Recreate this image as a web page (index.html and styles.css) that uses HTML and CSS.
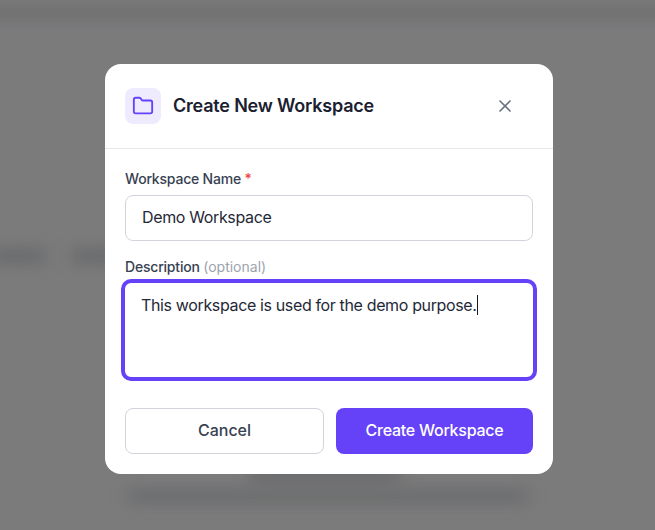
FILE: index.html
```html
<!DOCTYPE html>
<html lang="en">
<head>
<meta charset="utf-8">
<title>Create New Workspace</title>
<link rel="stylesheet" href="styles.css">
</head>
<body>
<div class="backdrop" aria-hidden="true">
  <div class="band band-top"></div>
  <div class="band-row">
    <div class="band band-a"></div>
    <div class="band band-b"></div>
  </div>
  <div class="band band-foot-a"></div>
  <div class="band band-foot-b"></div>
</div>
<div class="overlay">
  <section class="modal">
    <header class="modal-head">
      <div class="head-left">
        <div class="icon-tile">
          <svg width="22" height="22" viewBox="0 0 24 24" fill="none" stroke="#6542f8" stroke-width="2" stroke-linecap="round" stroke-linejoin="round"><path d="M20 20a2 2 0 0 0 2-2V8a2 2 0 0 0-2-2h-7.9a2 2 0 0 1-1.69-.9L9.6 3.9A2 2 0 0 0 7.93 3H4a2 2 0 0 0-2 2v13a2 2 0 0 0 2 2Z"/></svg>
        </div>
        <h2 class="title">Create New Workspace</h2>
      </div>
      <div class="close">
        <svg width="20" height="20" viewBox="0 0 24 24" fill="none" stroke="#6b7280" stroke-width="2" stroke-linecap="round" stroke-linejoin="round"><path d="M18 6 6 18"/><path d="m6 6 12 12"/></svg>
      </div>
    </header>
    <div class="modal-body">
      <div class="field">
        <div class="label">Workspace Name <span class="req">*</span></div>
        <div class="input">Demo Workspace</div>
      </div>
      <div class="field field-desc">
        <div class="label">Description <span class="opt">(optional)</span></div>
        <div class="textarea">This workspace is used for the demo purpose.<span class="caret"></span></div>
      </div>
      <div class="actions">
        <div class="btn btn-cancel">Cancel</div>
        <div class="btn btn-primary">Create Workspace</div>
      </div>
    </div>
  </section>
</div>
</body>
</html>
```
FILE: styles.css
```css
* { box-sizing: border-box; }
html, body { margin: 0; height: 530px; overflow: hidden; }
body {
  position: relative;
  background: #7b7b7c;
  font-family: Inter, "Liberation Sans", sans-serif;
}
.backdrop { position: absolute; inset: 0; overflow: hidden; }
.band { position: absolute; background: #616263; filter: blur(8px); }
.band-top { left: -20px; right: -20px; top: 9px; height: 8px; background: #666768; }
.band-row { position: absolute; inset: 0; }
.band-a { left: -10px; width: 55px; top: 250px; height: 12px; background: #656667; }
.band-b { left: 72px; width: 60px; top: 250px; height: 12px; background: #656667; }
.band-foot-a { left: 250px; width: 150px; top: 470px; height: 10px; }
.band-foot-b { left: 128px; width: 400px; top: 491px; height: 10px; background: #656667; }
.overlay {
  position: relative;
  height: 530px;
  padding: 64px 0 0 105px;
  display: flex;
  align-items: flex-start;
}
.modal {
  width: 448px;
  height: 410px;
  background: #fff;
  border-radius: 16px;
  overflow: hidden;
}
.modal-head {
  height: 85px;
  padding: 24px 20px;
  border-bottom: 1px solid #e5e7eb;
  display: flex;
  align-items: center;
  justify-content: space-between;
}
.head-left { display: flex; align-items: center; gap: 12px; }
.icon-tile {
  width: 36px;
  height: 36px;
  border-radius: 8px;
  background: #efebff;
  display: flex;
  align-items: center;
  justify-content: center;
}
.title {
  margin: 0;
  font-size: 18px;
  line-height: 28px;
  font-weight: 600;
  letter-spacing: -0.2px;
  color: #1a2030;
}
.close {
  width: 20px;
  height: 20px;
  margin-right: 18px;
}
.modal-body { padding: 20px; }
.label {
  font-size: 14px;
  line-height: 20px;
  font-weight: 500;
  letter-spacing: -0.2px;
  color: #374151;
  margin-bottom: 6px;
}
.req { color: #ef4444; }
.opt { color: #9ca3af; font-weight: 400; letter-spacing: 0; }
.input {
  height: 46px;
  border: 1px solid #d1d5db;
  border-radius: 8px;
  padding: 0 16px 2px;
  display: flex;
  align-items: center;
  font-size: 16px;
  letter-spacing: -0.36px;
  color: #1f2937;
}
.field-desc { margin-top: 16px; }
.field-desc .label { margin-bottom: 2px; }
.textarea {
  height: 102px;
  border: 4px solid #6542f8;
  border-radius: 10px;
  margin: 0 -4px;
  padding: 10px 16px;
  font-size: 16px;
  line-height: 24px;
  letter-spacing: -0.36px;
  color: #1f2937;
}
.caret {
  display: inline-block;
  width: 1px;
  height: 20px;
  background: #111827;
  vertical-align: -4px;
}
.actions {
  margin-top: 27px;
  display: flex;
  gap: 12px;
}
.btn {
  height: 46px;
  border-radius: 8px;
  display: flex;
  align-items: center;
  justify-content: center;
  padding-bottom: 2px;
  font-size: 16px;
  font-weight: 500;
}
.btn-cancel {
  width: 199px;
  border: 1px solid #d1d5db;
  color: #374151;
}
.btn-primary {
  width: 197px;
  background: #6542f8;
  color: #fff;
  letter-spacing: -0.25px;
}
```
